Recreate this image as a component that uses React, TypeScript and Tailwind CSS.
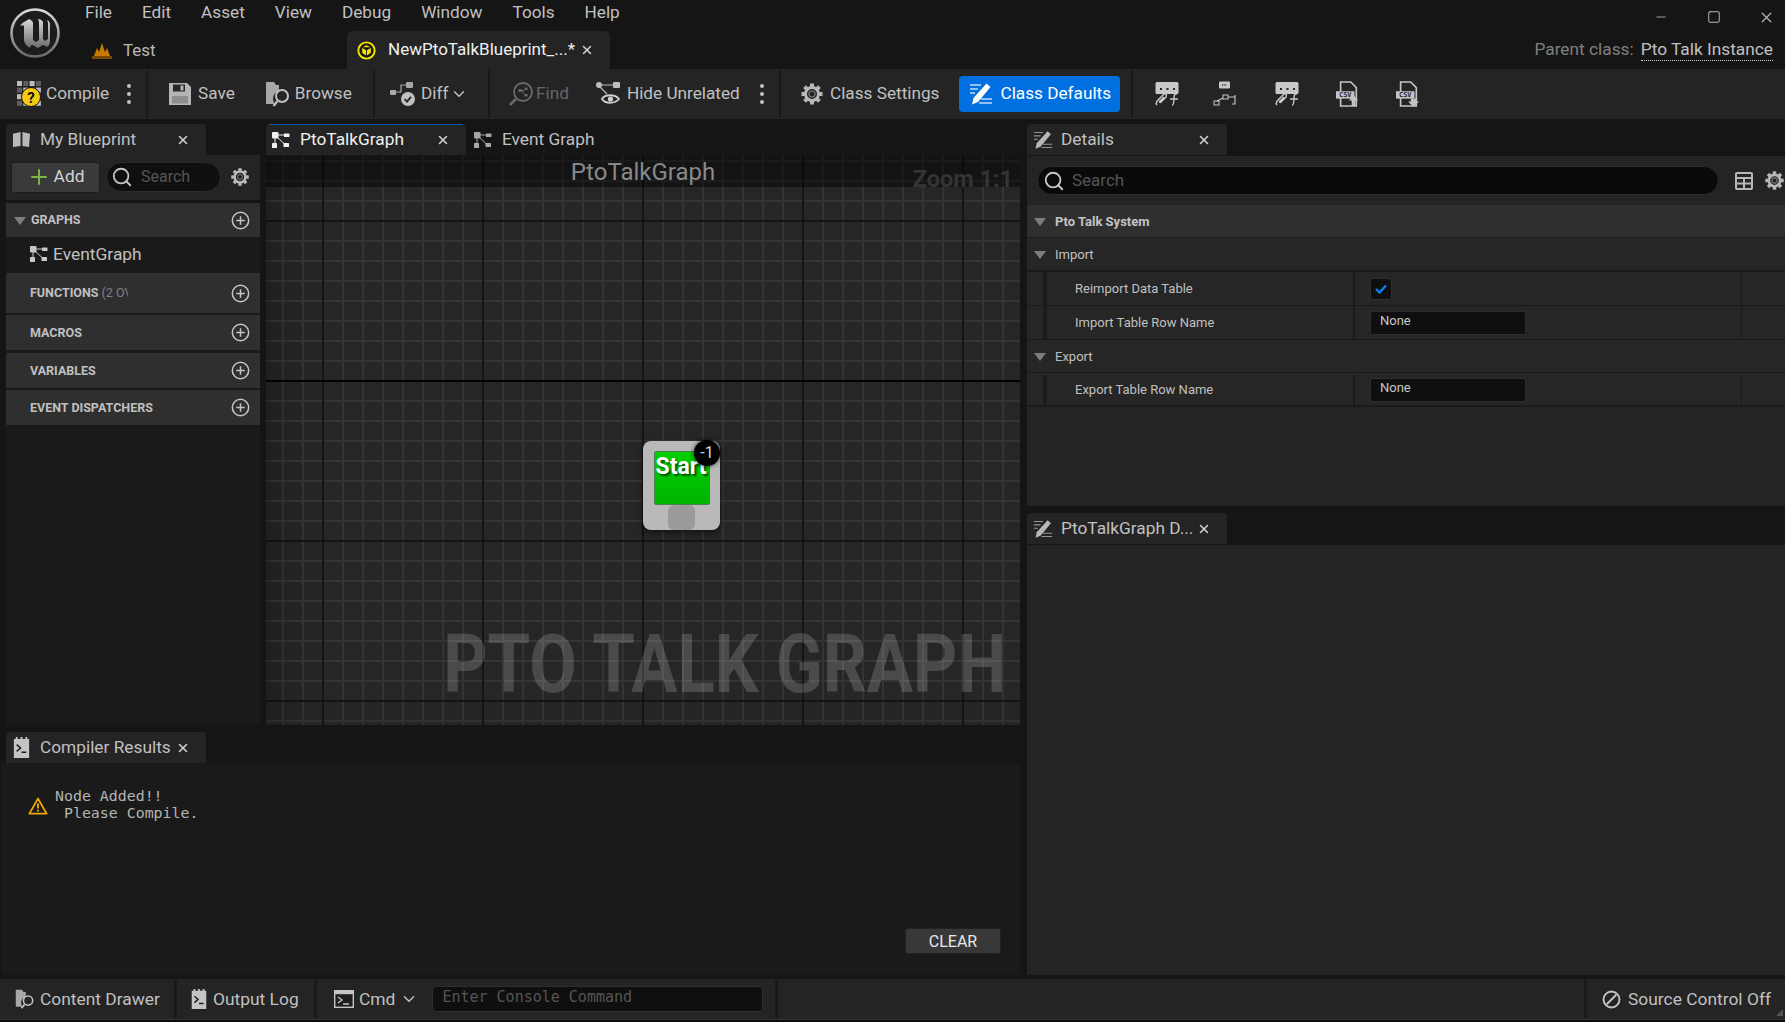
import React from "react";
import { X, ChevronDown, Search, Plus, Minus, Square } from "lucide-react";

type IconProps = { className?: string };

const GraphIcon: React.FC<IconProps> = ({ className }) => (
  <svg viewBox="0 0 18 16" className={className} fill="currentColor">
    <rect x="0" y="0" width="6.5" height="6.5" rx="1" />
    <rect x="12" y="1.5" width="5.5" height="3.5" rx="0.5" />
    <rect x="0" y="11" width="5" height="5" rx="0.5" />
    <rect x="11.5" y="11" width="5.5" height="4" rx="0.5" />
    <path d="M5 3h8M4 4l9 8.5M3 6v6" stroke="currentColor" strokeWidth="1" fill="none" />
  </svg>
);

const PenLinesIcon: React.FC<IconProps> = ({ className }) => (
  <svg viewBox="0 0 24 24" className={className} fill="currentColor">
    <path d="M17.5 1.5l4 3.5L9 20l-6 2.5 1.5-6.5z" />
    <path d="M1 3h11M1 7h8M1 11h5M12 17h11M10 21h13" stroke="currentColor" strokeWidth="1.3" opacity="0.75" />
  </svg>
);

const GearIcon: React.FC<IconProps> = ({ className }) => (
  <svg viewBox="0 0 24 24" className={className} fill="none" stroke="currentColor">
    {[0, 45, 90, 135, 180, 225, 270, 315].map((a) => (
      <path key={a} d="M12 1.5v5" strokeWidth="4" transform={`rotate(${a} 12 12)`} />
    ))}
    <circle cx="12" cy="12" r="6.5" strokeWidth="3" />
    <circle cx="12" cy="12" r="3" strokeWidth="1.2" opacity="0.6" />
  </svg>
);

const PlusCircle: React.FC = () => (
  <svg viewBox="0 0 20 20" className="h-[19px] w-[19px] text-[#c4c4c4]" fill="none" stroke="currentColor" strokeWidth="1.6">
    <circle cx="10" cy="10" r="8.6" />
    <path d="M10 5.5v9M5.5 10h9" />
  </svg>
);

const Triangle: React.FC = () => (
  <svg viewBox="0 0 12 8" className="h-2 w-3 text-[#7d7d7d]" fill="currentColor">
    <path d="M0 0h12L6 8z" />
  </svg>
);

const Kebab: React.FC<{ className?: string }> = ({ className }) => (
  <div className={`flex flex-col gap-[4px] ${className ?? ""}`}>
    <span className="h-[4px] w-[4px] rounded-full bg-[#c0c0c0]" />
    <span className="h-[4px] w-[4px] rounded-full bg-[#c0c0c0]" />
    <span className="h-[4px] w-[4px] rounded-full bg-[#c0c0c0]" />
  </div>
);

const UnrealLogo: React.FC = () => (
  <svg viewBox="0 0 52 52" className="h-[52px] w-[52px]">
    <defs>
      <linearGradient id="ue" x1="0" y1="0" x2="0" y2="1">
        <stop offset="0" stopColor="#d8d8d8" />
        <stop offset="1" stopColor="#6a6a6a" />
      </linearGradient>
    </defs>
    <circle cx="26" cy="26" r="23.5" fill="#1c1c1c" stroke="url(#ue)" strokeWidth="2.6" />
    <path
      d="M17 14c-3 1-5 3-6 5 2-1 3-1 4 0v13c0 5 3 7 6 9 0-2 1-3 3-3 1 1 3 2 5 3l5-3 5 2c1-2 2-4 2-6V18c0-3-1-4-3-5 1 2 1 3 1 5v14l-3 2-2-2V15c-1-2-3-3-5-3 1 2 1 3 1 5v16l-3 2-3-2V16c0-2-2-3-4-4z"
      fill="url(#ue)"
    />
  </svg>
);

const CompileIcon: React.FC = () => (
  <svg viewBox="0 0 26 28" className="h-7 w-[26px]">
    {[0, 1, 2, 3].flatMap((r) =>
      [0, 1, 2, 3].map((c) => (
        <rect key={`${r}${c}`} x={c * 6.3 + 1} y={r * 6.6 + 1} width="5" height="5" fill={(r + c) % 2 ? "#5e5e5e" : "#bdbdbd"} />
      ))
    )}
    <circle cx="15" cy="17" r="9.5" fill="#f6c915" stroke="#111" strokeWidth="1" />
    <text x="15" y="22.5" textAnchor="middle" fontSize="15" fontWeight="700" fill="#111" fontFamily="Roboto, sans-serif">?</text>
  </svg>
);

const SaveIcon: React.FC = () => (
  <svg viewBox="0 0 24 24" className="h-[24px] w-[24px] text-[#b5b5b5]" fill="currentColor">
    <path d="M1 1h18l4 4v18H1z" />
    <rect x="5" y="2.5" width="12" height="7" fill="#262626" />
    <rect x="12.5" y="3.5" width="3" height="5" fill="#b5b5b5" />
    <rect x="4" y="14" width="16" height="7.5" fill="#8e8e8e" />
  </svg>
);

const BrowseIcon: React.FC<IconProps> = ({ className }) => (
  <svg viewBox="0 0 26 26" className={className} fill="none">
    <path d="M1 1h8l2 3h3v6a8 8 0 0 0-4 13H1z" fill="#a8a8a8" />
    <circle cx="17" cy="15" r="6" stroke="#c0c0c0" strokeWidth="2" />
    <path d="M12.5 20l-4 5" stroke="#c0c0c0" strokeWidth="2.4" />
  </svg>
);

const DiffIcon: React.FC = () => (
  <svg viewBox="0 0 26 26" className="h-[26px] w-[26px]">
    <rect x="0" y="9" width="6" height="5" rx="1" fill="#a8a8a8" />
    <rect x="16" y="1" width="7" height="6" rx="1" fill="#a8a8a8" />
    <path d="M6 11h5V4h5" stroke="#a8a8a8" strokeWidth="1.2" fill="none" />
    <circle cx="18" cy="18" r="7" fill="#c0c0c0" />
    <path d="M14.5 18l2.5 2.6 4-4.8" stroke="#262626" strokeWidth="1.8" fill="none" />
  </svg>
);

const FindIcon: React.FC = () => (
  <svg viewBox="0 0 26 26" className="h-[26px] w-[26px] text-[#6a6a6a]" fill="none" stroke="currentColor">
    <circle cx="15" cy="11" r="9" strokeWidth="1.8" />
    <path d="M8 18l-6 6" strokeWidth="2.6" />
    <rect x="10.5" y="8" width="3" height="3" fill="currentColor" stroke="none" />
    <rect x="16.5" y="6.5" width="3" height="2.5" fill="currentColor" stroke="none" />
    <rect x="16.5" y="13" width="3" height="2.5" fill="currentColor" stroke="none" />
    <path d="M13.5 9.5h3M13.5 9.5l3 4" strokeWidth="1" />
  </svg>
);

const HideIcon: React.FC = () => (
  <svg viewBox="0 0 26 26" className="h-[26px] w-[26px]" fill="none">
    <circle cx="3" cy="4" r="3" fill="#bdbdbd" />
    <rect x="17" y="1" width="7" height="6" rx="1" fill="#bdbdbd" />
    <path d="M5 4h12M4 6l7 7" stroke="#bdbdbd" strokeWidth="1.2" />
    <path d="M6 18c3-5 13-5 17 0-4 5-14 5-17 0z" stroke="#d0d0d0" strokeWidth="1.8" />
    <circle cx="14.5" cy="18" r="2.6" fill="#d0d0d0" />
  </svg>
);

const ChatLinkIcon: React.FC<{ variant: number }> = ({ variant }) => (
  <svg viewBox="0 0 26 26" className="h-[26px] w-[26px]" fill="none" stroke="#c8c8c8">
    {variant === 1 ? (
      <>
        <rect x="6" y="0.5" width="11" height="7" rx="1.2" fill="#c8c8c8" stroke="none" />
        <path d="M9 4h5" stroke="#262626" strokeWidth="1.4" strokeDasharray="1.2 1.2" />
        <rect x="1" y="20" width="5" height="4" strokeWidth="1" />
        <rect x="10" y="14" width="5" height="4" strokeWidth="1" />
        <path d="M4 20l6-3M15 16h7v7h-3M22 14v2" strokeWidth="1.1" />
      </>
    ) : (
      <>
        <rect x="1.5" y="1" width="23" height="12" rx="1.5" fill="#c8c8c8" stroke="none" />
        <path d="M6 8h15" stroke="#262626" strokeWidth="2" strokeDasharray="2 4.5" />
        <path d="M3 24c-2-2 0-4 3-7l4-4c2-1 3 1 2 3l-5 5c-1 1-2 0-1-1l4-4" strokeWidth="1.5" />
        <path d="M18 24c2 0 2-4 2-7s1-5 3-4M16 18h8" strokeWidth="1.4" />
      </>
    )}
  </svg>
);

const CsvIcon: React.FC<{ down?: boolean }> = ({ down }) => (
  <svg viewBox="0 0 26 28" className="h-[26px] w-6" fill="none">
    <path d="M5 1h11l6 6v20H5z" stroke="#c4c4c4" strokeWidth="1.8" />
    <rect x="0" y="11" width="20" height="8" fill="#c4c4c4" />
    <text x="10" y="17.8" textAnchor="middle" fontSize="7.5" fontWeight="700" fill="#262626" fontFamily="DejaVu Sans Mono, monospace">CSV</text>
    {down ? (
      <path d="M16 19h6v3h3l-6 6-6-6h3z" fill="#c4c4c4" />
    ) : (
      <path d="M19 15l5 6h-3v6h-4v-6h-3z" fill="#c4c4c4" />
    )}
  </svg>
);

const TerminalNote: React.FC<IconProps> = ({ className }) => (
  <svg viewBox="0 0 16 22" className={className}>
    <path d="M0 2h2V0h2v2h3V0h2v2h3V0h2v2h2v20H0z" fill="#c4c4c4" />
    <path d="M3 8l4 3.5L3 15M8 16h5" stroke="#1e1e1e" strokeWidth="1.6" fill="none" />
  </svg>
);

const Tab: React.FC<{
  icon: React.ReactNode;
  label: string;
  width: string;
  active?: boolean;
  closable?: boolean;
  labelClass?: string;
  highlight?: boolean;
}> = ({ icon, label, width, active, closable = true, labelClass, highlight }) => (
  <div
    className={`relative flex h-[31px] items-center rounded-t-[4px] pl-[6px] pr-[16px] ${width} ${
      active ? "bg-[#242424]" : ""
    }`}
  >
    {highlight && <div className="absolute inset-x-[3px] top-0 h-[1px] bg-[#0a5cab]" />}
    <div className="flex w-[28px] shrink-0 items-center">{icon}</div>
    <span className={`whitespace-nowrap text-[17.3px] ${labelClass ?? "text-[#c0c0c0]"}`}>{label}</span>
    {closable && <X className="ml-auto h-[14px] w-[14px] text-[#d0d0d0]" strokeWidth={2.6} />}
  </div>
);

const ToolItem: React.FC<{
  icon: React.ReactNode;
  label: string;
  className?: string;
  muted?: boolean;
}> = ({ icon, label, className, muted }) => (
  <div className={`flex items-center gap-[6px] ${className ?? ""}`}>
    {icon}
    <span className={`whitespace-nowrap text-[17.2px] ${muted ? "text-[#666666]" : "text-[#c0c0c0]"}`}>{label}</span>
  </div>
);

const Separator: React.FC = () => <div className="h-[48px] w-[2px] shrink-0 bg-[#191919]" />;

const SectionRow: React.FC<{ height: string; children: React.ReactNode; margin?: string }> = ({ height, children, margin }) => (
  <div className={`flex items-center justify-between bg-[#2f2f2f] pl-[24px] pr-[10px] ${height} ${margin ?? ""}`}>
    <div className="flex items-center pt-[1px] text-[12.5px] font-bold text-[#c0c0c0]">{children}</div>
    <PlusCircle />
  </div>
);

const CategoryRow: React.FC<{ label: string }> = ({ label }) => (
  <div className="flex h-[33px] items-center gap-[9px] border-b border-[#1a1a1a] bg-[#262626] pl-[7px] pt-[2px]">
    <Triangle />
    <span className="text-[13px] text-[#c0c0c0]">{label}</span>
  </div>
);

const PropertyRow: React.FC<{ label: string; children: React.ReactNode; last?: boolean }> = ({ label, children, last }) => (
  <div className={`flex h-[34px] bg-[#262626] ${last ? "border-b-[2px] pt-[2px]" : "border-b"} border-[#1a1a1a]`}>
    <div className="w-[16px] shrink-0" />
    <div className="w-[4px] shrink-0 bg-[#1c1c1c]" />
    <div className="flex w-[306px] shrink-0 items-center pl-[28px] text-[13px] text-[#c0c0c0]">{label}</div>
    <div className="w-[2px] shrink-0 bg-[#1c1c1c]" />
    <div className="flex w-[386px] shrink-0 items-center pl-[15px]">{children}</div>
    <div className="w-[1px] shrink-0 bg-[#1c1c1c]" />
  </div>
);

const NoneInput: React.FC = () => (
  <div className="flex h-[24px] w-[156px] rounded-[3px] border border-[#2e2e2e] bg-[#0f0f0f] pl-[9px] text-[13px] leading-[17px] text-[#c8c8c8]">
    None
  </div>
);

function Separator2() {
  return <div className="h-[38px] w-[3px] shrink-0 bg-[#191919]" />;
}

const App: React.FC = () => {
  return (
    <div className="flex h-[1022px] w-[1785px] flex-col overflow-hidden bg-[#151515] font-['Roboto',sans-serif]">
      {/* title bar */}
      <header className="flex h-[69px] shrink-0">
        <div className="flex w-[66px] shrink-0 items-start pl-[9px] pt-[7px]">
          <UnrealLogo />
        </div>
        <div className="flex min-w-0 flex-1 flex-col">
          <nav className="flex h-[31px] items-start gap-[30px] pl-[19px] pt-[2px] text-[17.2px] leading-[20px] text-[#c0c0c0]">
            <span>File</span>
            <span>Edit</span>
            <span>Asset</span>
            <span>View</span>
            <span>Debug</span>
            <span>Window</span>
            <span>Tools</span>
            <span>Help</span>
            <div className="ml-auto flex items-start gap-[39px] pr-[10px] pt-[8px] text-[#b8b8b8]">
              <Minus className="h-[14px] w-[14px]" strokeWidth={1.5} />
              <Square className="h-[14px] w-[14px]" strokeWidth={1.7} />
              <X className="-ml-[2px] h-[17px] w-[17px] -translate-y-[1px]" strokeWidth={1.7} />
            </div>
          </nav>
          <div className="flex h-[38px] items-end">
            <div className="flex h-[38px] w-[281px] shrink-0 items-center gap-[11px] pl-[26px] pt-[1px]">
              <svg viewBox="0 0 20 16" className="h-[16px] w-5">
                <path d="M2 13l3-8 2 4 3-9 3 9 2-4 3 8z" fill="#c77a05" />
                <rect x="0" y="13" width="20" height="3" fill="#7a4a05" />
              </svg>
              <span className="text-[17px] text-[#b8b8b8]">Test</span>
            </div>
            <div className="flex h-[38px] w-[263px] shrink-0 items-center rounded-t-[5px] bg-[#242424] pl-[10px]">
              <svg viewBox="0 0 20 20" className="h-[19px] w-[19px] shrink-0">
                <circle cx="10" cy="10" r="8.6" fill="#151515" stroke="#f5e600" strokeWidth="2" />
                <path d="M10 4l5 2.6v6L10 16l-5-3.4v-6zM5 6.6l5 3 5-3M10 9.6V16" fill="#f5e600" stroke="#151515" strokeWidth="0.9" />
              </svg>
              <span className="ml-[12px] whitespace-nowrap text-[17px] text-[#f0f0f0]">NewPtoTalkBlueprint_...*</span>
              <X className="ml-[5px] h-[14px] w-[14px] text-[#d0d0d0]" strokeWidth={2.6} />
            </div>
            <div className="ml-auto flex h-[38px] items-center gap-[7px] pr-[12px] text-[17.3px]">
              <span className="text-[#808080]">Parent class:</span>
              <span className="border-b border-dotted border-[#d0d0d0] leading-[21px] text-[#c0c0c0]">Pto Talk Instance</span>
            </div>
          </div>
        </div>
      </header>

      {/* toolbar */}
      <div className="flex h-[50px] shrink-0 items-center bg-[#242424]">
        <div className="flex w-[146px] shrink-0 items-center pl-[16px]">
          <ToolItem icon={<CompileIcon />} label="Compile" className="!gap-[4px]" />
          <Kebab className="ml-[18px]" />
        </div>
        <Separator />
        <div className="flex w-[225px] shrink-0 items-center pl-[20px]">
          <ToolItem icon={<SaveIcon />} label="Save" />
          <ToolItem icon={<BrowseIcon className="h-[26px] w-[26px]" />} label="Browse" className="ml-[30px] !gap-[4px]" />
        </div>
        <Separator />
        <div className="flex w-[113px] shrink-0 items-center pl-[15px]">
          <ToolItem icon={<DiffIcon />} label="Diff" className="!gap-[5px]" />
          <ChevronDown className="ml-[2px] h-[18px] w-[18px] text-[#c0c0c0]" strokeWidth={2} />
        </div>
        <Separator />
        <div className="flex w-[289px] shrink-0 items-center pl-[18px]">
          <ToolItem icon={<FindIcon />} label="Find" muted className="!gap-[2px]" />
          <ToolItem icon={<HideIcon />} label="Hide Unrelated" className="ml-[27px] !gap-[5px]" />
          <Kebab className="ml-[20px]" />
        </div>
        <Separator />
        <div className="flex w-[350px] shrink-0 items-center pl-[19px]">
          <ToolItem icon={<GearIcon className="h-[24px] w-[24px] text-[#b8b8b8]" />} label="Class Settings" />
          <div className="ml-[20px] flex h-[36px] w-[161px] items-center gap-[7px] rounded-[4px] bg-[#0070e0] pl-[10px]">
            <PenLinesIcon className="h-[24px] w-[24px] text-white" />
            <span className="whitespace-nowrap text-[17.2px] text-white">Class Defaults</span>
          </div>
        </div>
        <Separator />
        <div className="flex items-center pl-[21px]">
          <ChatLinkIcon variant={0} />
          <div className="ml-[33px]">
            <ChatLinkIcon variant={1} />
          </div>
          <div className="ml-[35px]">
            <ChatLinkIcon variant={0} />
          </div>
          <div className="ml-[36px]">
            <CsvIcon />
          </div>
          <div className="ml-[36px]">
            <CsvIcon down />
          </div>
        </div>
      </div>

      {/* workspace */}
      <div className="flex min-h-0 flex-1 pl-[6px] pt-[5px]">
        <div className="flex w-[1014px] shrink-0 flex-col">
          <div className="flex h-[601px] shrink-0 gap-[6px]">
            {/* my blueprint */}
            <aside className="flex w-[254px] shrink-0 flex-col">
              <div className="flex h-[31px] items-center">
                <Tab
                  active
                  width="w-[200px]"
                  icon={
                    <svg viewBox="0 0 20 18" className="h-[17px] w-[19px]" fill="#b8b8b8">
                      <path d="M1 3l8-2v15l-8 1zM11 1l8 2-1 14-7-1z" />
                    </svg>
                  }
                  label="My Blueprint"
                />
              </div>
              <div className="flex h-[45px] shrink-0 items-center bg-[#242424] pb-[1px] pl-[5px] pr-[10px]">
                <div className="flex h-[31px] w-[89px] items-center justify-center gap-[3px] rounded-[3px] border border-[#1d1d1d] bg-[#3a3a3a]">
                  <Plus className="h-[24px] w-[24px] text-[#7ab648]" strokeWidth={2} />
                  <span className="text-[17.3px] text-[#d4d4d4]">Add</span>
                </div>
                <div className="ml-[6px] flex h-[30px] w-[115px] items-center rounded-full border border-[#2c2c2c] bg-[#0f0f0f] pl-[4px]">
                  <Search className="h-[22px] w-[22px] text-[#c4c4c4]" strokeWidth={2} />
                  <span className="ml-[8px] text-[16px] text-[#555555]">Search</span>
                </div>
                <GearIcon className="ml-auto h-[20px] w-[20px] text-[#b8b8b8]" />
              </div>
              <div className="mt-[3px] flex min-h-0 flex-1 flex-col bg-[#1a1a1a]">
                <SectionRow height="h-[34px]">
                  <span className="-ml-[16px] mr-[5px] flex">
                    <Triangle />
                  </span>
                  GRAPHS
                </SectionRow>
                <div className="flex h-[36px] items-center gap-[5px] pb-[2px] pl-[24px] text-[17.4px] text-[#c0c0c0]">
                  <GraphIcon className="h-[16px] w-[18px] text-[#c8c8c8]" />
                  EventGraph
                </div>
                <SectionRow height="h-[40px]">
                  <span className="w-[98px] overflow-hidden whitespace-nowrap">
                    FUNCTIONS <span className="font-normal text-[#808080]">(2 OVERRIDABLE)</span>
                  </span>
                </SectionRow>
                <SectionRow height="h-[35px]" margin="mt-[2px]">MACROS</SectionRow>
                <SectionRow height="h-[35px]" margin="mt-[3px]">VARIABLES</SectionRow>
                <SectionRow height="h-[35px]" margin="mt-[2px]">EVENT DISPATCHERS</SectionRow>
              </div>
            </aside>

            {/* graph */}
            <section className="flex min-w-0 flex-1 flex-col">
              <div className="flex h-[32px] shrink-0">
                <Tab
                  active
                  highlight
                  width="w-[200px]"
                  labelClass="text-[#f0f0f0]"
                  icon={<GraphIcon className="h-[16px] w-[18px] text-[#f0f0f0]" />}
                  label="PtoTalkGraph"
                />
                <div className="pl-[2px]">
                  <Tab
                    width="w-[140px]"
                    closable={false}
                    icon={<GraphIcon className="h-[16px] w-[18px] text-[#a8a8a8]" />}
                    label="Event Graph"
                  />
                </div>
              </div>
              <div className="relative min-h-0 flex-1 overflow-hidden bg-[#262626] bg-[linear-gradient(to_right,#141414_2px,transparent_2px),linear-gradient(to_bottom,#141414_2px,transparent_2px),linear-gradient(to_right,#343434_2px,transparent_2px),linear-gradient(to_bottom,#343434_2px,transparent_2px)] bg-[size:160px_160px,160px_160px,20px_20px,20px_20px] bg-[position:56px_0,0_64px,16px_0,0_4px]">
                <div className="absolute inset-x-0 top-0 flex h-[31px] items-center justify-center bg-black/45">
                  <span className="text-[24px] text-[#8a8a8a]">PtoTalkGraph</span>
                </div>
                <div className="absolute inset-x-0 top-[224px] h-[2px] bg-black" />
                <div className="pointer-events-none absolute inset-0 shadow-[inset_30px_0_40px_-20px_rgba(0,0,0,0.25)]" />
                <span className="absolute right-[7px] top-[6px] text-[23.5px] font-bold text-[#343434]">Zoom 1:1</span>

                {/* start node */}
                <div className="absolute left-[377px] top-[285px] flex h-[89px] w-[77px] flex-col items-center rounded-[8px] bg-[#b9b9b9] pt-[10px] shadow-[0_3px_6px_rgba(0,0,0,0.5)]">
                  <div className="h-[54px] w-[56px] overflow-hidden rounded-[2px] border border-[#4c7f4c] bg-[linear-gradient(to_bottom,#00d000,#00b400)] pl-[1px] text-[23px] font-bold leading-[30px] text-white [text-shadow:2px_2px_2px_rgba(0,0,0,0.6)]">
                    Start
                  </div>
                  <div className="h-[25px] w-[27px] rounded-[6px] bg-[#9a9a9a]" />
                  <div className="absolute right-0 -top-[1px] flex h-[26px] w-[26px] items-center justify-center rounded-full bg-black text-[16px] text-[#d8d8d8] shadow-[0_0_4px_rgba(0,0,0,0.8)]">
                    -1
                  </div>
                </div>

                <span className="absolute bottom-[20px] right-[14px] origin-right scale-x-[0.84] whitespace-nowrap text-[82px] font-bold leading-[82px] text-white/[0.17]">
                  PTO TALK GRAPH
                </span>
              </div>
            </section>
          </div>

          {/* compiler results */}
          <div className="mt-[7px] flex h-[243px] shrink-0 flex-col">
            <Tab
              active
              width="w-[200px]"
              icon={<TerminalNote className="ml-[1px] h-[21px] w-[17px]" />}
              label="Compiler Results"
            />
            <div className="relative -ml-[5px] flex-1 bg-[#1a1a1a] pl-[27px] pt-[25px] font-['DejaVu_Sans_Mono',monospace] text-[14.9px] leading-[17px] text-[#b4b4b4]">
              <div className="flex items-center">
                <svg viewBox="0 0 20 18" className="mt-[2px] h-[18px] w-[20px]" fill="none" stroke="#eda800" strokeWidth="1.9">
                  <path d="M10 1.6L18.6 16.6H1.4z" strokeLinejoin="round" />
                  <path d="M10 6.5v5M10 12.8v1.6" />
                </svg>
                <pre className="ml-[7px] font-['DejaVu_Sans_Mono',monospace]">{"Node Added!!\n Please Compile."}</pre>
              </div>
              <div className="absolute bottom-[21px] right-[19px] flex h-[26px] w-[96px] items-center justify-center rounded-[3px] border border-[#222] bg-[#383838] font-['Roboto',sans-serif] text-[16px] text-[#e8e8e8]">
                CLEAR
              </div>
            </div>
          </div>
        </div>

        {/* right column */}
        <div className="ml-[7px] flex min-w-0 flex-1 flex-col">
          <Tab active width="w-[200px]" icon={<PenLinesIcon className="h-[20px] w-[20px] text-[#b8b8b8]" />} label="Details" />
          <div className="mt-[1px] flex h-[350px] shrink-0 flex-col bg-[#242424]">
            <div className="flex h-[49px] shrink-0 items-center pl-[10px]">
              <div className="flex h-[29px] w-[682px] items-center rounded-full border border-[#2e2e2e] bg-[#0a0a0a] pl-[5px]">
                <Search className="h-[22px] w-[22px] text-[#c8c8c8]" strokeWidth={2} />
                <span className="ml-[7px] text-[17px] text-[#555555]">Search</span>
              </div>
              <svg viewBox="0 0 18 18" className="ml-[16px] h-[18px] w-[18px] text-[#b8b8b8]" fill="none" stroke="currentColor" strokeWidth="2">
                <rect x="1" y="1" width="16" height="16" rx="1" />
                <path d="M1 6h16M1 11.5h16M9 6v11" />
              </svg>
              <GearIcon className="ml-[11px] h-[21px] w-[21px] shrink-0 text-[#b8b8b8]" />
            </div>
            <div className="flex h-[33px] shrink-0 items-center gap-[9px] border-b border-[#1a1a1a] bg-[#2f2f2f] pl-[7px] pt-[1px]">
              <Triangle />
              <span className="text-[13px] font-bold text-[#c4c4c4]">Pto Talk System</span>
            </div>
            <CategoryRow label="Import" />
            <div className="h-[1px] bg-[#1a1a1a]" />
            <PropertyRow label="Reimport Data Table">
              <div className="flex h-[22px] w-[22px] items-center justify-center rounded-[3px] border border-[#2e2e2e] bg-[#0f0f0f]">
                <svg viewBox="0 0 12 10" className="h-[10px] w-[12px]" fill="none" stroke="#0f7cf0" strokeWidth="2.4">
                  <path d="M1 5l3.5 3.5L11 1.5" />
                </svg>
              </div>
            </PropertyRow>
            <PropertyRow label="Import Table Row Name">
              <NoneInput />
            </PropertyRow>
            <CategoryRow label="Export" />
            <PropertyRow label="Export Table Row Name" last>
              <NoneInput />
            </PropertyRow>
          </div>
          <div className="mt-[7px]">
            <Tab
              active
              width="w-[200px]"
              closable
              icon={<PenLinesIcon className="h-[20px] w-[20px] text-[#b8b8b8]" />}
              label="PtoTalkGraph D..."
            />
          </div>
          <div className="mt-[1px] h-[430px] shrink-0 bg-[#242424]" />
        </div>
      </div>

      {/* status bar */}
      <footer className="flex h-[40px] shrink-0 items-center bg-[#242424] pl-[2px] text-[17.4px] text-[#c0c0c0]">
        <div className="flex w-[172px] shrink-0 items-center gap-[5px] pl-[13px]">
          <BrowseIcon className="h-[20px] w-[20px]" />
          Content Drawer
        </div>
        <Separator2 />
        <div className="flex w-[137px] shrink-0 items-center gap-[6px] pl-[14px]">
          <TerminalNote className="h-[20px] w-[16px]" />
          Output Log
        </div>
        <Separator2 />
        <div className="flex w-[458px] shrink-0 items-center pl-[17px]">
          <svg viewBox="0 0 20 18" className="h-[18px] w-[20px]">
            <rect x="0.7" y="0.7" width="18.6" height="16.6" fill="#1e1e1e" stroke="#c4c4c4" strokeWidth="1.4" />
            <rect x="0.7" y="0.7" width="18.6" height="3.5" fill="#c4c4c4" />
            <path d="M4 7l4 3-4 3M9 14h6" stroke="#c4c4c4" strokeWidth="1.4" fill="none" />
          </svg>
          <span className="ml-[5px]">Cmd</span>
          <ChevronDown className="ml-[5px] h-[18px] w-[18px]" strokeWidth={2} />
          <div className="ml-[14px] flex h-[26px] w-[331px] rounded-[4px] border border-[#2e2e2e] bg-[#0f0f0f] pl-[9px] pt-[2px] font-['DejaVu_Sans_Mono',monospace] text-[15px] leading-[17px] text-[#555555]">
            Enter Console Command
          </div>
        </div>
        <Separator2 />
        <div className="ml-auto flex h-full items-center">
          <Separator2 />
          <div className="relative flex h-full w-[198px] items-center gap-[7px] pl-[15px]">
            <svg viewBox="0 0 20 20" className="h-[19px] w-[19px]" fill="none" stroke="#c4c4c4" strokeWidth="2">
              <circle cx="10" cy="10" r="8.4" />
              <path d="M5 15L15 5" />
            </svg>
            Source Control Off
            <div className="absolute bottom-[3px] right-[2px] h-0 w-0 border-b-[7px] border-l-[7px] border-b-[#555] border-l-transparent" />
          </div>
        </div>
      </footer>
      <div className="h-[3px] shrink-0 border-t border-[#333] bg-[#0c0c0c]" />
    </div>
  );
};

export default App;
